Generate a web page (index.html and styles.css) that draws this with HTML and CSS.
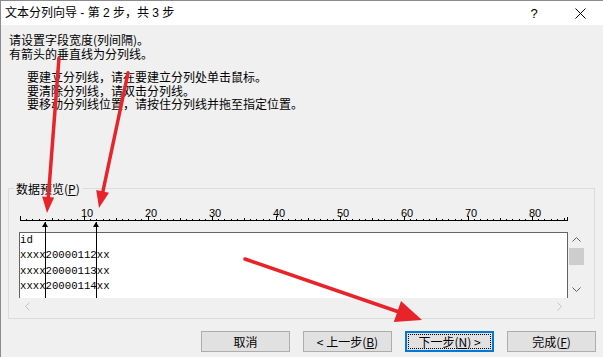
FILE: index.html
```html
<!DOCTYPE html>
<html lang="zh-CN">
<head>
  <meta charset="UTF-8">
  <meta name="viewport" content="width=device-width, initial-scale=1.0">
  <title>文本分列向导</title>
  <link rel="stylesheet" href="styles.css">
</head>
<body>
  <div class="window">
    <div class="titlebar">
      <span class="title">文本分列向导 - 第 2 步，共 3 步</span>
      <span class="title-btn help">?</span>
      <span class="title-btn close">
        <svg width="11" height="11" viewBox="0 0 11 11" stroke="#000" stroke-width="1">
          <path d="M0.5 0.5L10.5 10.5M10.5 0.5L0.5 10.5"/>
        </svg>
      </span>
    </div>

    <div class="content">
      <div class="intro">
        <p>请设置字段宽度(列间隔)。</p>
        <p>有箭头的垂直线为分列线。</p>
      </div>
      <div class="hints">
        <p>要建立分列线，请在要建立分列处单击鼠标。</p>
        <p>要清除分列线，请双击分列线。</p>
        <p>要移动分列线位置，请按住分列线并拖至指定位置。</p>
      </div>

      <fieldset class="group">
        <legend>数据预览(<u>P</u>)</legend>
        <div class="preview-area">
          <svg class="ruler" id="ruler" width="566" height="28" viewBox="0 0 566 28"></svg>
          <div class="preview">
            <div class="preview-text">
              <div class="row">id</div>
              <div class="row">xxxx20000112xx</div>
              <div class="row">xxxx20000113xx</div>
              <div class="row">xxxx20000114xx</div>
            </div>
            <div class="vscroll">
              <span class="sb-btn">
                <svg width="9" height="5" viewBox="0 0 9 5"><path d="M0.5 4.5L4.5 0.5L8.5 4.5" fill="none" stroke="#606060"/></svg>
              </span>
              <span class="thumb"></span>
              <span class="sb-spacer"></span>
              <span class="sb-btn">
                <svg width="9" height="5" viewBox="0 0 9 5"><path d="M0.5 0.5L4.5 4.5L8.5 0.5" fill="none" stroke="#606060"/></svg>
              </span>
            </div>
            <div class="hscroll">
              <span class="sb-btn">
                <svg width="5" height="9" viewBox="0 0 5 9"><path d="M4.5 0.5L0.5 4.5L4.5 8.5" fill="none" stroke="#c2c2c2"/></svg>
              </span>
              <span class="sb-btn">
                <svg width="5" height="9" viewBox="0 0 5 9"><path d="M0.5 0.5L4.5 4.5L0.5 8.5" fill="none" stroke="#c2c2c2"/></svg>
              </span>
            </div>
            <div class="corner"></div>
          </div>
          <div class="marker" style="--col: 4"></div>
          <div class="marker" style="--col: 12"></div>
        </div>
      </fieldset>

      <div class="buttons">
        <button class="btn">取消</button>
        <button class="btn">&lt; 上一步(<u>B</u>)</button>
        <button class="btn focused">下一步(<u>N</u>) &gt;</button>
        <button class="btn">完成(<u>F</u>)</button>
      </div>
    </div>

    <!-- red annotation arrows drawn over the dialog -->
    <svg class="annotations" width="603" height="357" viewBox="0 0 603 357">
      <g stroke="#e8242b" stroke-width="3.5" stroke-linecap="round">
        <line x1="59" y1="58" x2="48.2" y2="199"/>
        <line x1="128" y1="73" x2="102.6" y2="193"/>
        <line x1="245" y1="259" x2="399" y2="312"/>
      </g>
      <g fill="#e8242b">
        <polygon points="47,213 54.2,197.5 42.2,196.5"/>
        <polygon points="99,208 109,192.8 96.2,190"/>
        <polygon points="422,320 393.8,321.9 401,301.1"/>
      </g>
    </svg>
  </div>

  <script>
    // build the ruler ticks, one per character column (6.4px wide)
    const ruler = document.getElementById('ruler');
    let marks = '<rect x="1" y="16" width="548" height="1"/>';
    for (let i = 0; i <= 85; i++) {
      const x = Math.floor(1 + i * 6.4);
      const h = i % 10 === 0 ? 5 : (i % 5 === 0 ? 3 : 2);
      marks += `<rect x="${x}" y="${17 - h}" width="1" height="${h}"/>`;
      if (i % 10 === 0 && i > 0) {
        marks += `<text x="${x - 3}" y="13">${i}</text>`;
      }
    }
    marks += '<rect x="548" y="13" width="1" height="4"/>';
    ruler.innerHTML = marks;
  </script>
</body>
</html>
```

FILE: styles.css
```css
body {
  margin: 0;
  background-color: #f0f0f0;
  font-family: "Noto Sans CJK SC", sans-serif;
  font-size: 12px;
  color: #000;
}

.window {
  position: relative;
  width: 602px;
  height: 356px;
  border-top: 1px solid #8c8c8c;
  border-left: 1px solid #8c8c8c;
  overflow: hidden;
}

.titlebar {
  display: flex;
  align-items: center;
  height: 24px;
  background-color: #fff;
}

.title {
  flex: 1;
  padding-left: 4px;
  line-height: 24px;
  font-family: "Liberation Sans", "Noto Sans CJK SC", sans-serif;
}

.title-btn {
  width: 46px;
  height: 24px;
  display: flex;
  align-items: center;
  justify-content: center;
}

.help {
  font-family: "Liberation Sans", sans-serif;
  font-size: 13px;
}

.content {
  padding: 8px 0 0 7px;
}

.content p {
  margin: 0;
  line-height: 13.5px;
  white-space: nowrap;
}

.intro {
  padding-left: 1px;
}

.hints {
  margin-top: 10px;
  padding-left: 19px;
}

.group {
  box-sizing: border-box;
  width: 587px;
  margin: 71px 0 0 0;
  padding: 8px 9px 3px 10px;
  border: 1px solid #dcdcdc;
}

.group legend {
  margin-left: -5px;
  padding: 0 2px;
  line-height: 14px;
}

.preview-area {
  position: relative;
}

.ruler {
  display: block;
  shape-rendering: crispEdges;
  font-family: "Liberation Sans", sans-serif;
  font-size: 11px;
}

.preview {
  display: grid;
  grid-template-columns: 549px 17px;
  grid-template-rows: 66px 17px;
}

.preview-text {
  background-color: #fff;
  border: 1px solid #646464;
  border-bottom: none;
  overflow: hidden;
  font-family: "Liberation Mono", monospace;
  font-size: 10.67px;
  line-height: 15.5px;
}

.preview-text .row {
  white-space: nowrap;
}

.vscroll {
  display: flex;
  flex-direction: column;
  align-items: center;
}

.vscroll .sb-btn {
  height: 16px;
  width: 17px;
  display: flex;
  align-items: center;
  justify-content: center;
}

.vscroll .sb-btn:last-child {
  height: 17px;
}

.thumb {
  width: 15px;
  height: 17px;
  background-color: #cdcdcd;
}

.sb-spacer {
  flex: 1;
}

.hscroll {
  display: flex;
  justify-content: space-between;
}

.hscroll .sb-btn {
  width: 17px;
  display: flex;
  align-items: center;
  justify-content: center;
}

.marker {
  position: absolute;
  top: 18px;
  left: calc(var(--col) * 6.4px);
  width: 1px;
  height: 76px;
  background-color: #000;
}

.marker::before {
  content: "";
  position: absolute;
  top: 0;
  left: -3px;
  border-left: 3.5px solid transparent;
  border-right: 3.5px solid transparent;
  border-bottom: 5px solid #000;
}

.buttons {
  display: flex;
  justify-content: flex-end;
  gap: 13px;
  margin-top: 12px;
  padding-right: 7px;
}

.btn {
  position: relative;
  width: 89px;
  height: 21px;
  padding: 0;
  border: 1px solid #adadad;
  background-color: #e1e1e1;
  font-family: "Noto Sans CJK SC", sans-serif;
  font-size: 12px;
  line-height: 19px;
  color: #000;
}

.btn.focused {
  border-color: #0078d7;
  box-shadow: inset 0 0 0 1px #0078d7;
}

.btn.focused::after {
  content: "";
  position: absolute;
  top: 2px;
  left: 2px;
  right: 2px;
  bottom: 2px;
  border: 1px dotted #000;
}

.annotations {
  position: absolute;
  top: -1px;
  left: -1px;
  pointer-events: none;
}
```
